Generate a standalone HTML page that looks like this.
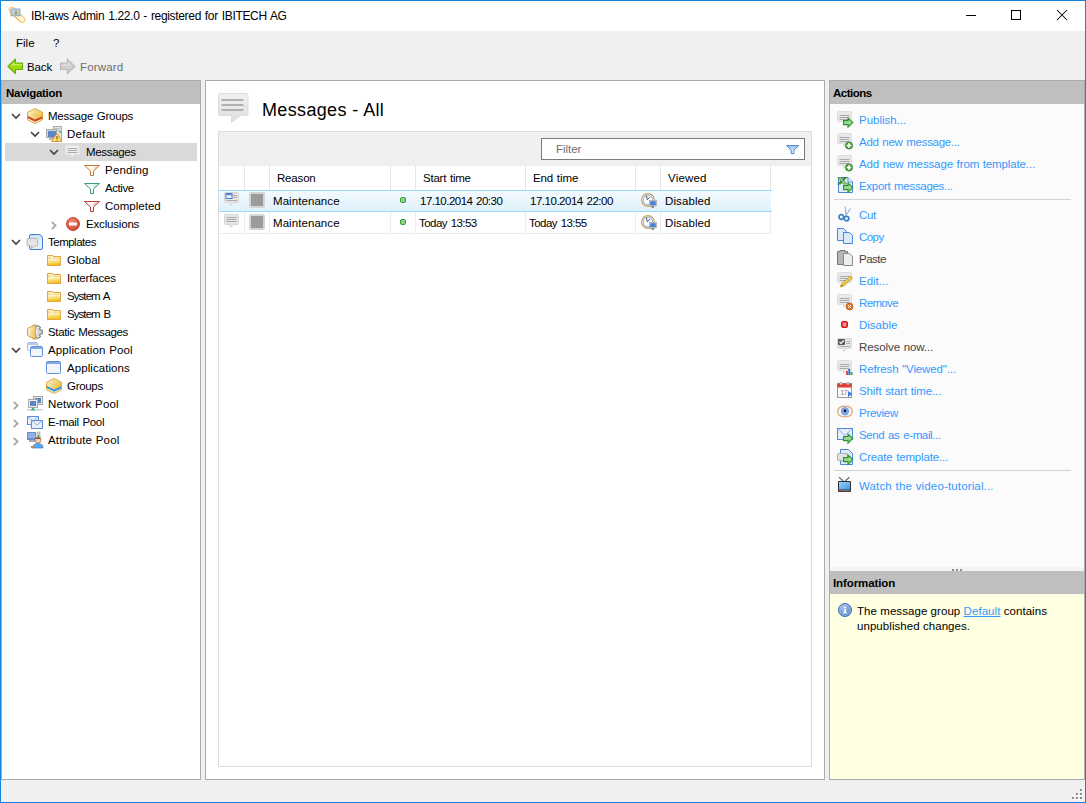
<!DOCTYPE html>
<html><head><meta charset="utf-8">
<style>
*{box-sizing:border-box;margin:0;padding:0}
html,body{width:1086px;height:803px;overflow:hidden;background:#f0f0f0}
body{position:relative;font-family:"Liberation Sans",sans-serif;font-size:12px;color:#000}
.a{position:absolute}
.t{position:absolute;font-size:11.5px;line-height:14px;white-space:nowrap}
.b{font-weight:bold}
svg{position:absolute;overflow:visible}
</style></head><body>
<div class="a" style="left:0;top:0;width:1086px;height:803px;border:1px solid #1883d7"></div>
<div class="a" style="left:1px;top:1px;width:1084px;height:30px;background:#fff"></div>
<div class="t" style="left:31px;top:9px;font-size:12px;letter-spacing:-0.325px;word-spacing:0.825px;">IBI-aws Admin 1.22.0 - registered for IBITECH AG</div>
<div class="t" style="left:16px;top:36px;letter-spacing:0.000px;">File</div><div class="t" style="left:53px;top:36px;">?</div>
<div class="t" style="left:27px;top:60px;letter-spacing:-0.100px;">Back</div><div class="t" style="left:80px;top:60px;letter-spacing:0.167px;color:#6d6d6d">Forward</div>
<svg style="left:6px;top:4px" width="22" height="22" viewBox="0 0 22 22"><g transform="translate(11.1,10.75) rotate(44)"><rect x="-10" y="-2.75" width="20" height="5.5" rx="2.75" fill="#fff7e2" stroke="#f0b040" stroke-width="1.1" stroke-dasharray="1.2 0.5"/></g><rect x="5" y="5" width="9" height="6.8" fill="#b9d3ef" stroke="#7b9cc0" stroke-width="0.8"/><path d="M8.4 10.2 L10 5.8 L11.6 10.2 Z" fill="#b8962a"/><g transform="translate(11.1,10.75) rotate(44)"><path d="M-7.25 2.75 H7.25" fill="none" stroke="#f0b040" stroke-width="1.1" stroke-dasharray="1.2 0.5"/></g></svg><svg style="left:7px;top:58px" width="16" height="16" viewBox="0 0 16 16"><path d="M1 8.5 L8.5 1 V5 H15.5 V11.5 H8.5 V15.5 Z" fill="#9ed80e" stroke="#6aad12" stroke-width="1.1" stroke-linejoin="round"/><path d="M3.2 8.3 L7.6 3.8 V6 H14.6 V7.2 H7.5 Z" fill="#c4ee5a"/></svg><svg style="left:60px;top:58px" width="16" height="16" viewBox="0 0 16 16"><path d="M14.8 8.5 L7.3 1 V5 H0.5 V11.5 H7.3 V15.6 Z" fill="#cfcfcf" stroke="#b9b9b9" stroke-width="1.1" stroke-linejoin="miter"/><path d="M2 6.3 H8 V4 L12 8 H2 Z" fill="#dcdcdc"/></svg><svg style="left:966px;top:15px" width="10" height="1" viewBox="0 0 10 1"><rect width="10" height="1" fill="#000"/></svg><svg style="left:1011px;top:10px" width="10" height="10" viewBox="0 0 10 10"><rect x="0.5" y="0.5" width="9" height="9" fill="none" stroke="#000"/></svg><svg style="left:1057px;top:10px" width="10" height="10" viewBox="0 0 10 10"><path d="M0 0 L10 10 M10 0 L0 10" stroke="#000" stroke-width="1.05"/></svg>
<div class="a" style="left:1px;top:80px;width:200px;height:700px;border:1px solid #ababab;background:#fff"></div>
<div class="a" style="left:2px;top:81px;width:198px;height:23px;background:#bfbfbf"></div>
<div class="t" style="left:6px;top:86px;font-weight:bold;letter-spacing:-0.278px;">Navigation</div>
<div class="a" style="left:5px;top:143px;width:192px;height:18px;background:#d9d9d9"></div>
<svg style="left:11px;top:113px" width="10" height="7" viewBox="0 0 10 7"><path d="M1 1 L5 5 L9 1" fill="none" stroke="#404040" stroke-width="1.6"/></svg>
<svg style="left:27px;top:108px" width="16" height="16" viewBox="0 0 16 16"><defs><linearGradient id="hgd2402e" x1="0" y1="0" x2="1" y2="0.6"><stop offset="0" stop-color="#fff8e0"/><stop offset="0.55" stop-color="#f6d98a"/><stop offset="1" stop-color="#f0c030"/></linearGradient></defs><path d="M8 0.5 L15.5 4.3 L15.5 11.7 L8 15.5 L0.5 11.7 L0.5 4.3 Z" fill="#fdf6d2"/><path d="M1 4.5 L8 1 L15 4.5 V9 L8 12 L1 8.5 Z" fill="url(#hgd2402e)"/><path d="M8 1.5 L8 7 M3 5 L8 7 L13 5" fill="none" stroke="#e8c070" stroke-width="0.7" opacity="0.8"/><path d="M1 8 L8 11.5 L15 8.5 V10.7 L8 13.7 L1 10.2 Z" fill="#d2402e"/><path d="M8 0.5 L15.5 4.3 L15.5 11.7 L8 15.5 L0.5 11.7 L0.5 4.3 Z" fill="none" stroke="#d6a640" stroke-width="1"/></svg>
<div class="t" style="left:48px;top:109px;letter-spacing:-0.225px;word-spacing:0.725px;">Message Groups</div>
<svg style="left:30px;top:131px" width="10" height="7" viewBox="0 0 10 7"><path d="M1 1 L5 5 L9 1" fill="none" stroke="#404040" stroke-width="1.6"/></svg>
<svg style="left:46px;top:126px" width="16" height="16" viewBox="0 0 16 16"><rect x="7.5" y="0.5" width="8" height="14" fill="#e6e6e6" stroke="#a9a9a9"/><rect x="9" y="2" width="5" height="1" fill="#bbb"/><rect x="9" y="4" width="5" height="1" fill="#bbb"/><rect x="0.5" y="3.5" width="10" height="8" fill="#d9d9d9" stroke="#a9a9a9"/><rect x="2" y="5" width="8" height="6" fill="#5b86c8"/><rect x="3" y="12" width="5" height="2" fill="#b9b9b9"/><circle cx="14" cy="6" r="1" fill="#3cb34a"/><path d="M11 7.3 L16 15.5 H5.5 Z" fill="#fbe27a" stroke="#d99a3a" stroke-width="1" stroke-linejoin="round"/><rect x="10.4" y="10" width="1.2" height="3" fill="#8a5a10"/><rect x="10.4" y="13.6" width="1.2" height="1" fill="#8a5a10"/></svg>
<div class="t" style="left:67px;top:127px;letter-spacing:0.267px;">Default</div>
<svg style="left:49px;top:149px" width="10" height="7" viewBox="0 0 10 7"><path d="M1 1 L5 5 L9 1" fill="none" stroke="#404040" stroke-width="1.6"/></svg>
<svg style="left:65px;top:145px" width="16" height="14" viewBox="0 0 16 14"><path d="M1.5 0.5 H13.5 Q14.5 0.5 14.5 1.5 V8.5 Q14.5 9.5 13.5 9.5 H9.5 L6.5 12.5 L6.5 9.5 H1.5 Q0.5 9.5 0.5 8.5 V1.5 Q0.5 0.5 1.5 0.5 Z" fill="#eeeeee" stroke="#e2e2e2" stroke-width="1"/><rect x="2.5" y="3" width="10" height="1" fill="#acacac"/><rect x="2.5" y="5" width="10" height="1" fill="#acacac"/><rect x="2.5" y="7" width="10" height="1" fill="#acacac"/></svg>
<div class="t" style="left:86px;top:145px;letter-spacing:-0.329px;">Messages</div>
<svg style="left:84px;top:165px" width="16" height="12" viewBox="0 0 16 12"><path d="M0.5 0.5 H15.5 L9.5 6 V10.5 H6.5 V6 Z" fill="#fffaf3" stroke="#c77b35" stroke-width="1"/><path d="M9 5.5 L14 1.5 L10 1.5 Z" fill="#c77b35" opacity="0.25"/></svg>
<div class="t" style="left:105px;top:163px;letter-spacing:0.217px;">Pending</div>
<svg style="left:84px;top:183px" width="16" height="12" viewBox="0 0 16 12"><path d="M0.5 0.5 H15.5 L9.5 6 V10.5 H6.5 V6 Z" fill="#f4fbf7" stroke="#3f9a6e" stroke-width="1"/><path d="M9 5.5 L14 1.5 L10 1.5 Z" fill="#3f9a6e" opacity="0.25"/></svg>
<div class="t" style="left:105px;top:181px;letter-spacing:-0.420px;">Active</div>
<svg style="left:84px;top:201px" width="16" height="12" viewBox="0 0 16 12"><path d="M0.5 0.5 H15.5 L9.5 6 V10.5 H6.5 V6 Z" fill="#fff6f6" stroke="#b43b3b" stroke-width="1"/><path d="M9 5.5 L14 1.5 L10 1.5 Z" fill="#b43b3b" opacity="0.25"/></svg>
<div class="t" style="left:105px;top:199px;letter-spacing:0.013px;">Completed</div>
<svg style="left:51px;top:221px" width="7" height="10" viewBox="0 0 7 10"><path d="M0.8 0.8 L4.6 4.5 L0.8 8.2" fill="none" stroke="#a6a6a6" stroke-width="1.8"/></svg>
<svg style="left:66px;top:217px" width="14" height="14" viewBox="0 0 14 14"><defs><radialGradient id="ne" cx="0.4" cy="0.35" r="0.7"><stop offset="0" stop-color="#f3907f"/><stop offset="1" stop-color="#d23b2b"/></radialGradient></defs><circle cx="7" cy="7" r="6.5" fill="url(#ne)" stroke="#c8473a" stroke-width="1"/><rect x="3" y="5.5" width="8" height="3" fill="#fff"/></svg>
<div class="t" style="left:86px;top:217px;letter-spacing:-0.178px;">Exclusions</div>
<svg style="left:11px;top:239px" width="10" height="7" viewBox="0 0 10 7"><path d="M1 1 L5 5 L9 1" fill="none" stroke="#404040" stroke-width="1.6"/></svg>
<svg style="left:27px;top:234px" width="16" height="16" viewBox="0 0 16 16"><defs><linearGradient id="tg" x1="0" y1="0" x2="1" y2="1"><stop offset="0" stop-color="#c7dcf8"/><stop offset="1" stop-color="#eef5fe"/></linearGradient></defs><path d="M4 0.5 H11 Q15.5 0.5 15.5 5 V14 Q15.5 15.5 14 15.5 H4 Q2.5 15.5 2.5 14 V2 Q2.5 0.5 4 0.5 Z" fill="url(#tg)" stroke="#3f7fd6" stroke-width="1"/><path d="M1 4.5 H9.5 Q10.5 4.5 10.5 5.5 V11 Q10.5 12 9.5 12 H7 L4.5 14.5 V12 H1 Q0 12 0 11 V5.5 Q0 4.5 1 4.5 Z" fill="#e4e4e4" stroke="#b8b8b8" stroke-width="1"/></svg>
<div class="t" style="left:48px;top:235px;letter-spacing:-0.500px;">Templates</div>
<svg style="left:47px;top:255px" width="14" height="11" viewBox="0 0 14 11"><defs><linearGradient id="fg" x1="0" y1="0" x2="0.3" y2="1"><stop offset="0" stop-color="#fff6c8"/><stop offset="1" stop-color="#f1c21a"/></linearGradient></defs><path d="M0.5 1 Q0.5 0.5 1 0.5 H5.5 L6.5 1.5 H13 Q13.5 1.5 13.5 2 V10.5 H0.5 Z" fill="#fdf0c6" stroke="#e6a448" stroke-width="1"/><path d="M1 3.2 H4.5 M6.5 3.2 H13" stroke="#f3c868" stroke-width="0.9"/><path d="M1 5 H13 V10 H1 Z" fill="url(#fg)"/><path d="M0.5 1 Q0.5 0.5 1 0.5 H5.5 L6.5 1.5 H13 Q13.5 1.5 13.5 2 V10.5 H0.5 Z" fill="none" stroke="#e6a448" stroke-width="1"/></svg>
<div class="t" style="left:67px;top:253px;letter-spacing:-0.040px;">Global</div>
<svg style="left:47px;top:273px" width="14" height="11" viewBox="0 0 14 11"><defs><linearGradient id="fg" x1="0" y1="0" x2="0.3" y2="1"><stop offset="0" stop-color="#fff6c8"/><stop offset="1" stop-color="#f1c21a"/></linearGradient></defs><path d="M0.5 1 Q0.5 0.5 1 0.5 H5.5 L6.5 1.5 H13 Q13.5 1.5 13.5 2 V10.5 H0.5 Z" fill="#fdf0c6" stroke="#e6a448" stroke-width="1"/><path d="M1 3.2 H4.5 M6.5 3.2 H13" stroke="#f3c868" stroke-width="0.9"/><path d="M1 5 H13 V10 H1 Z" fill="url(#fg)"/><path d="M0.5 1 Q0.5 0.5 1 0.5 H5.5 L6.5 1.5 H13 Q13.5 1.5 13.5 2 V10.5 H0.5 Z" fill="none" stroke="#e6a448" stroke-width="1"/></svg>
<div class="t" style="left:67px;top:271px;letter-spacing:-0.156px;">Interfaces</div>
<svg style="left:47px;top:291px" width="14" height="11" viewBox="0 0 14 11"><defs><linearGradient id="fg" x1="0" y1="0" x2="0.3" y2="1"><stop offset="0" stop-color="#fff6c8"/><stop offset="1" stop-color="#f1c21a"/></linearGradient></defs><path d="M0.5 1 Q0.5 0.5 1 0.5 H5.5 L6.5 1.5 H13 Q13.5 1.5 13.5 2 V10.5 H0.5 Z" fill="#fdf0c6" stroke="#e6a448" stroke-width="1"/><path d="M1 3.2 H4.5 M6.5 3.2 H13" stroke="#f3c868" stroke-width="0.9"/><path d="M1 5 H13 V10 H1 Z" fill="url(#fg)"/><path d="M0.5 1 Q0.5 0.5 1 0.5 H5.5 L6.5 1.5 H13 Q13.5 1.5 13.5 2 V10.5 H0.5 Z" fill="none" stroke="#e6a448" stroke-width="1"/></svg>
<div class="t" style="left:67px;top:289px;letter-spacing:-0.933px;word-spacing:1.433px;">System A</div>
<svg style="left:47px;top:309px" width="14" height="11" viewBox="0 0 14 11"><defs><linearGradient id="fg" x1="0" y1="0" x2="0.3" y2="1"><stop offset="0" stop-color="#fff6c8"/><stop offset="1" stop-color="#f1c21a"/></linearGradient></defs><path d="M0.5 1 Q0.5 0.5 1 0.5 H5.5 L6.5 1.5 H13 Q13.5 1.5 13.5 2 V10.5 H0.5 Z" fill="#fdf0c6" stroke="#e6a448" stroke-width="1"/><path d="M1 3.2 H4.5 M6.5 3.2 H13" stroke="#f3c868" stroke-width="0.9"/><path d="M1 5 H13 V10 H1 Z" fill="url(#fg)"/><path d="M0.5 1 Q0.5 0.5 1 0.5 H5.5 L6.5 1.5 H13 Q13.5 1.5 13.5 2 V10.5 H0.5 Z" fill="none" stroke="#e6a448" stroke-width="1"/></svg>
<div class="t" style="left:67px;top:307px;letter-spacing:-0.933px;word-spacing:1.433px;">System B</div>
<svg style="left:27px;top:324px" width="16" height="16" viewBox="0 0 16 16"><defs><linearGradient id="sg" x1="0" y1="0" x2="1" y2="0.3"><stop offset="0" stop-color="#fffaf0"/><stop offset="1" stop-color="#f1c35a"/></linearGradient></defs><path d="M12.78 5.83 L15.25 6.15 L15.25 9.85 L12.78 10.17 L12.52 10.62 L13.48 12.92 L10.27 14.77 L8.76 12.79 L8.24 12.79 L6.73 14.77 L3.52 12.92 L4.48 10.62 L4.22 10.17 L1.75 9.85 L1.75 6.15 L4.22 5.83 L4.48 5.38 L3.52 3.08 L6.73 1.23 L8.24 3.21 L8.76 3.21 L10.27 1.23 L13.48 3.08 L12.52 5.38 Z" fill="#d6d6d6" stroke="#6f6f6f" stroke-width="1" stroke-linejoin="round"/><circle cx="8.5" cy="8" r="2" fill="#f6f6f6"/><path d="M8.5 0.5 L0.5 4.5 L0.5 11.5 L8.5 15.5 Z" fill="url(#sg)" stroke="#dca640" stroke-width="1"/></svg>
<div class="t" style="left:48px;top:325px;letter-spacing:-0.354px;word-spacing:0.854px;">Static Messages</div>
<svg style="left:11px;top:347px" width="10" height="7" viewBox="0 0 10 7"><path d="M1 1 L5 5 L9 1" fill="none" stroke="#404040" stroke-width="1.6"/></svg>
<svg style="left:27px;top:342px" width="16" height="16" viewBox="0 0 16 16"><g opacity="0.6"><rect x="0.5" y="0.5" width="10" height="8" rx="1" fill="#f2f5fb" stroke="#5e8fd6" stroke-width="1"/><rect x="1" y="1" width="9" height="2" fill="#82a9e3"/></g><g opacity="1"><rect x="3.5" y="4.5" width="12" height="10" rx="1" fill="#f2f5fb" stroke="#5e8fd6" stroke-width="1"/><rect x="4" y="5" width="11" height="2" fill="#82a9e3"/></g></svg>
<div class="t" style="left:48px;top:343px;letter-spacing:0.107px;word-spacing:0.393px;">Application Pool</div>
<svg style="left:46px;top:361px" width="16" height="14" viewBox="0 0 16 14"><g opacity="1"><rect x="0.5" y="0.5" width="14" height="12" rx="1" fill="#f2f5fb" stroke="#5e8fd6" stroke-width="1"/><rect x="1" y="1" width="13" height="2" fill="#82a9e3"/></g></svg>
<div class="t" style="left:67px;top:361px;letter-spacing:0.064px;">Applications</div>
<svg style="left:46px;top:378px" width="16" height="16" viewBox="0 0 16 16"><defs><linearGradient id="hg3a96d8" x1="0" y1="0" x2="1" y2="0.6"><stop offset="0" stop-color="#fff8e0"/><stop offset="0.55" stop-color="#f6d98a"/><stop offset="1" stop-color="#f0c030"/></linearGradient></defs><path d="M8 0.5 L15.5 4.3 L15.5 11.7 L8 15.5 L0.5 11.7 L0.5 4.3 Z" fill="#fdf6d2"/><path d="M1 4.5 L8 1 L15 4.5 V9 L8 12 L1 8.5 Z" fill="url(#hg3a96d8)"/><path d="M8 1.5 L8 7 M3 5 L8 7 L13 5" fill="none" stroke="#e8c070" stroke-width="0.7" opacity="0.8"/><path d="M1 8 L8 11.5 L15 8.5 V10.7 L8 13.7 L1 10.2 Z" fill="#3a96d8"/><path d="M8 0.5 L15.5 4.3 L15.5 11.7 L8 15.5 L0.5 11.7 L0.5 4.3 Z" fill="none" stroke="#d6a640" stroke-width="1"/></svg>
<div class="t" style="left:67px;top:379px;letter-spacing:-0.300px;">Groups</div>
<svg style="left:13px;top:401px" width="7" height="10" viewBox="0 0 7 10"><path d="M0.8 0.8 L4.6 4.5 L0.8 8.2" fill="none" stroke="#a6a6a6" stroke-width="1.8"/></svg>
<svg style="left:27px;top:396px" width="16" height="15" viewBox="0 0 16 15"><rect x="6.5" y="0.5" width="9" height="8" fill="#e8e8e8" stroke="#a9a9a9"/><rect x="8" y="2" width="6" height="5" fill="#5c86c6"/><rect x="1.5" y="3.5" width="9" height="8" fill="#ececec" stroke="#a9a9a9"/><rect x="3" y="5" width="6" height="5" fill="#5c86c6"/><rect x="5" y="11.5" width="2" height="1.5" fill="#9a9a9a"/><rect x="0" y="13" width="16" height="1.5" fill="#c9d3d3"/><rect x="5" y="12" width="2" height="1" fill="#3aa66a"/><rect x="4" y="13" width="4" height="1.5" fill="#4cbd7c"/></svg>
<div class="t" style="left:48px;top:397px;letter-spacing:0.170px;word-spacing:0.330px;">Network Pool</div>
<svg style="left:13px;top:419px" width="7" height="10" viewBox="0 0 7 10"><path d="M0.8 0.8 L4.6 4.5 L0.8 8.2" fill="none" stroke="#a6a6a6" stroke-width="1.8"/></svg>
<svg style="left:27px;top:416px" width="16" height="13" viewBox="0 0 16 13"><rect x="0.5" y="0.5" width="11" height="8" fill="#e9f1fc" stroke="#5e8fd6"/><path d="M0.5 0.5 L6 5 L11.5 0.5" fill="none" stroke="#8fb2e6"/><rect x="4.5" y="4.5" width="11" height="8" fill="#e9f1fc" stroke="#5e8fd6"/><path d="M4.5 4.5 L10 9 L15.5 4.5" fill="none" stroke="#8fb2e6"/></svg>
<div class="t" style="left:48px;top:415px;letter-spacing:-0.311px;word-spacing:0.811px;">E-mail Pool</div>
<svg style="left:13px;top:437px" width="7" height="10" viewBox="0 0 7 10"><path d="M0.8 0.8 L4.6 4.5 L0.8 8.2" fill="none" stroke="#a6a6a6" stroke-width="1.8"/></svg>
<svg style="left:27px;top:432px" width="16" height="16" viewBox="0 0 16 16"><rect x="0" y="0" width="9" height="8" fill="#6b8fcb"/><rect x="1" y="1" width="7" height="5" fill="#8fb0e0"/><rect x="2" y="8" width="6" height="2" fill="#a9a9a9"/><rect x="10" y="0" width="3" height="6" fill="#d0d0d0" stroke="#999" stroke-width="0.5"/><rect x="11" y="3" width="1" height="2" fill="#3aa66a"/><circle cx="11" cy="8" r="3" fill="#f4d2b0" stroke="#9a5a2a" stroke-width="0.6"/><path d="M8 7 Q11 3.5 14 7 Z" fill="#8a4f22"/><path d="M5 16 Q6 11.5 11 11.5 Q16 11.5 16 16 Z" fill="#59a9ef" stroke="#2a6fc0" stroke-width="0.6"/><rect x="4" y="14" width="2" height="2" fill="#e67e22"/></svg>
<div class="t" style="left:48px;top:433px;letter-spacing:0.142px;word-spacing:0.358px;">Attribute Pool</div>
<div class="a" style="left:205px;top:80px;width:620px;height:700px;border:1px solid #ababab;background:#fff"></div>
<svg style="left:218px;top:93px" width="31" height="31" viewBox="0 0 31 31"><defs><linearGradient id="cg" x1="0" y1="0" x2="0" y2="1"><stop offset="0" stop-color="#f1f1f1"/><stop offset="1" stop-color="#dedede"/></linearGradient></defs><path d="M2 0.5 H28 Q30 0.5 30 2.5 V20.5 Q30 22.5 28 22.5 H22.5 L13.5 29.5 V22.5 H2 Q0.5 22.5 0.5 20.5 V2.5 Q0.5 0.5 2 0.5 Z" fill="url(#cg)" stroke="#dcdcdc" stroke-width="1"/><rect x="3.5" y="6" width="22" height="2" fill="#b0b0b0"/><rect x="3.5" y="11" width="22" height="2" fill="#b0b0b0"/><rect x="3.5" y="16" width="22" height="2" fill="#b0b0b0"/></svg>
<div class="t" style="left:262px;top:100px;font-size:18px;letter-spacing:0.345px;word-spacing:0.155px;line-height:21px">Messages - All</div>
<div class="a" style="left:218px;top:131px;width:594px;height:636px;border:1px solid #dcdcdc"></div>
<div class="a" style="left:219px;top:132px;width:592px;height:34px;background:#f0f0f0"></div>
<div class="a" style="left:541px;top:138px;width:264px;height:22px;border:1px solid #7a7a7a;background:#fff"></div>
<div class="t" style="left:556px;top:142px;letter-spacing:-0.040px;color:#6d6d6d">Filter</div>
<svg style="left:786px;top:145px" width="14" height="10" viewBox="0 0 14 10"><defs><linearGradient id="flt" x1="0" y1="0" x2="0" y2="1"><stop offset="0" stop-color="#9cc4f0"/><stop offset="1" stop-color="#f0f7ff"/></linearGradient></defs><path d="M0.5 0.6 H12.6 L7.9 5.2 V8.6 H5.2 V5.2 Z" fill="url(#flt)" stroke="#4a7fcf" stroke-width="0.95" stroke-linejoin="round"/></svg>
<div class="a" style="left:244px;top:166px;width:1px;height:24px;background:#e5e5e5"></div>
<div class="a" style="left:244px;top:212px;width:1px;height:22px;background:#ececec"></div>
<div class="a" style="left:269px;top:166px;width:1px;height:24px;background:#e5e5e5"></div>
<div class="a" style="left:269px;top:212px;width:1px;height:22px;background:#ececec"></div>
<div class="a" style="left:390px;top:166px;width:1px;height:24px;background:#e5e5e5"></div>
<div class="a" style="left:390px;top:212px;width:1px;height:22px;background:#ececec"></div>
<div class="a" style="left:415px;top:166px;width:1px;height:24px;background:#e5e5e5"></div>
<div class="a" style="left:415px;top:212px;width:1px;height:22px;background:#ececec"></div>
<div class="a" style="left:525px;top:166px;width:1px;height:24px;background:#e5e5e5"></div>
<div class="a" style="left:525px;top:212px;width:1px;height:22px;background:#ececec"></div>
<div class="a" style="left:635px;top:166px;width:1px;height:24px;background:#e5e5e5"></div>
<div class="a" style="left:635px;top:212px;width:1px;height:22px;background:#ececec"></div>
<div class="a" style="left:660px;top:166px;width:1px;height:24px;background:#e5e5e5"></div>
<div class="a" style="left:660px;top:212px;width:1px;height:22px;background:#ececec"></div>
<div class="a" style="left:770px;top:166px;width:1px;height:24px;background:#e5e5e5"></div>
<div class="a" style="left:770px;top:212px;width:1px;height:22px;background:#ececec"></div>
<div class="t" style="left:277px;top:171px;letter-spacing:-0.180px;">Reason</div>
<div class="t" style="left:423px;top:171px;letter-spacing:-0.213px;word-spacing:0.713px;">Start time</div>
<div class="t" style="left:533px;top:171px;letter-spacing:-0.100px;word-spacing:0.600px;">End time</div>
<div class="t" style="left:668px;top:171px;letter-spacing:0.180px;">Viewed</div>
<div class="a" style="left:219px;top:190px;width:552px;height:22px;border-top:1px solid #99d9fa;border-bottom:1px solid #99d9fa;background:linear-gradient(#f3faff,#dff1fc)"></div><div class="a" style="left:771px;top:190px;width:1px;height:1px;background:#99d9fa"></div><div class="a" style="left:771px;top:211px;width:1px;height:1px;background:#99d9fa"></div>
<div class="a" style="left:219px;top:233px;width:552px;height:1px;background:#ececec"></div>
<svg style="left:224px;top:192px" width="16" height="15" viewBox="0 0 16 15"><path d="M1.5 0.5 H13.5 Q14.5 0.5 14.5 1.5 V9.5 Q14.5 10.5 13.5 10.5 H9.5 L6.5 13.5 L6.5 10.5 H1.5 Q0.5 10.5 0.5 9.5 V1.5 Q0.5 0.5 1.5 0.5 Z" fill="#e6e6e6" stroke="#d6d6d6" stroke-width="1"/><rect x="2" y="1.5" width="6" height="5" fill="#eef4fd" stroke="#4f7fcf" stroke-width="1"/><rect x="2.5" y="2" width="5" height="1.2" fill="#4f7fcf"/><rect x="9" y="3" width="4" height="1" fill="#a9a9a9"/><rect x="9" y="5" width="4" height="1" fill="#a9a9a9"/><rect x="2.5" y="8" width="10.5" height="1" fill="#a9a9a9"/></svg>
<div class="a" style="left:249px;top:192px;width:16px;height:16px;border:2px solid #d4d4d4;border-radius:2px;background:#9b9b9b"></div>
<div class="t" style="left:273px;top:194px;letter-spacing:0.070px;">Maintenance</div>
<svg style="left:400px;top:197px" width="6" height="6" viewBox="0 0 6 6"><rect x="0.5" y="0.5" width="5" height="5" rx="1.5" fill="#8fd48a" stroke="#3a9a3a" stroke-width="1"/></svg>
<div class="t" style="left:420px;top:194px;letter-spacing:-0.514px;word-spacing:1.014px;">17.10.2014 20:30</div>
<div class="t" style="left:530px;top:194px;letter-spacing:-0.479px;word-spacing:0.979px;">17.10.2014 22:00</div>
<svg style="left:641px;top:193px" width="16" height="16" viewBox="0 0 16 16"><circle cx="7" cy="7" r="6.4" fill="#fafcff" stroke="#c9a25a" stroke-width="1.2"/><circle cx="7" cy="7" r="4.8" fill="none" stroke="#7aa3e4" stroke-width="0.9"/><path d="M5.5 2.8 L6.2 6.8 L9.2 4" fill="none" stroke="#555" stroke-width="1"/><rect x="8.5" y="7.5" width="7" height="5.5" fill="#e8e8e8" stroke="#a0a0a0" stroke-width="0.7"/><rect x="9.2" y="8.2" width="5.6" height="4.1" fill="#4a7fcf"/><rect x="10.5" y="13" width="2.5" height="2" fill="#8a8a8a"/></svg>
<div class="t" style="left:665px;top:194px;letter-spacing:0.100px;">Disabled</div>
<svg style="left:224px;top:214px" width="16" height="15" viewBox="0 0 16 15"><path d="M1.5 0.5 H13.5 Q14.5 0.5 14.5 1.5 V9.5 Q14.5 10.5 13.5 10.5 H9.5 L6.5 13.5 L6.5 10.5 H1.5 Q0.5 10.5 0.5 9.5 V1.5 Q0.5 0.5 1.5 0.5 Z" fill="#e6e6e6" stroke="#d6d6d6" stroke-width="1"/><rect x="2.5" y="3" width="10" height="1" fill="#a9a9a9"/><rect x="2.5" y="5" width="10" height="1" fill="#a9a9a9"/><rect x="2.5" y="7" width="10" height="1" fill="#a9a9a9"/></svg>
<div class="a" style="left:249px;top:214px;width:16px;height:16px;border:2px solid #d4d4d4;border-radius:2px;background:#9b9b9b"></div>
<div class="t" style="left:273px;top:216px;letter-spacing:0.070px;">Maintenance</div>
<svg style="left:400px;top:219px" width="6" height="6" viewBox="0 0 6 6"><rect x="0.5" y="0.5" width="5" height="5" rx="1.5" fill="#8fd48a" stroke="#3a9a3a" stroke-width="1"/></svg>
<div class="t" style="left:419px;top:216px;letter-spacing:-0.544px;word-spacing:1.044px;">Today 13:53</div>
<div class="t" style="left:529px;top:216px;letter-spacing:-0.544px;word-spacing:1.044px;">Today 13:55</div>
<svg style="left:641px;top:215px" width="16" height="16" viewBox="0 0 16 16"><circle cx="7" cy="7" r="6.4" fill="#fafcff" stroke="#c9a25a" stroke-width="1.2"/><circle cx="7" cy="7" r="4.8" fill="none" stroke="#7aa3e4" stroke-width="0.9"/><path d="M5.5 2.8 L6.2 6.8 L9.2 4" fill="none" stroke="#555" stroke-width="1"/><rect x="8.5" y="7.5" width="7" height="5.5" fill="#e8e8e8" stroke="#a0a0a0" stroke-width="0.7"/><rect x="9.2" y="8.2" width="5.6" height="4.1" fill="#4a7fcf"/><rect x="10.5" y="13" width="2.5" height="2" fill="#8a8a8a"/></svg>
<div class="t" style="left:665px;top:216px;letter-spacing:0.100px;">Disabled</div>
<div class="a" style="left:829px;top:80px;width:256px;height:700px;border:1px solid #ababab;background:#fbfbfb"></div>
<div class="a" style="left:830px;top:81px;width:254px;height:23px;background:#bfbfbf"></div>
<div class="t" style="left:833px;top:86px;font-weight:bold;letter-spacing:-0.500px;">Actions</div>
<div class="t" style="left:859px;top:113px;letter-spacing:0.000px;color:#3399ff">Publish...</div>
<div class="t" style="left:859px;top:135px;letter-spacing:-0.280px;word-spacing:0.780px;color:#3399ff">Add new message...</div>
<div class="t" style="left:859px;top:157px;letter-spacing:-0.130px;word-spacing:0.630px;color:#3399ff">Add new message from template...</div>
<div class="t" style="left:859px;top:179px;letter-spacing:-0.306px;word-spacing:0.806px;color:#3399ff">Export messages...</div>
<div class="a" style="left:834px;top:199px;width:237px;height:1px;background:#d2d2d2"></div>
<div class="t" style="left:859px;top:208px;letter-spacing:-0.350px;color:#3399ff">Cut</div>
<div class="t" style="left:859px;top:230px;letter-spacing:-0.567px;color:#3399ff">Copy</div>
<div class="t" style="left:859px;top:252px;letter-spacing:-0.500px;color:#444">Paste</div>
<div class="t" style="left:859px;top:274px;letter-spacing:0.000px;color:#3399ff">Edit...</div>
<div class="t" style="left:859px;top:296px;letter-spacing:-0.660px;color:#3399ff">Remove</div>
<div class="t" style="left:859px;top:318px;letter-spacing:0.000px;color:#3399ff">Disable</div>
<div class="t" style="left:859px;top:340px;letter-spacing:-0.083px;word-spacing:0.583px;color:#444">Resolve now...</div>
<div class="t" style="left:859px;top:362px;letter-spacing:-0.124px;word-spacing:0.624px;color:#3399ff">Refresh "Viewed"...</div>
<div class="t" style="left:859px;top:384px;letter-spacing:-0.106px;word-spacing:0.606px;color:#3399ff">Shift start time...</div>
<div class="t" style="left:859px;top:406px;letter-spacing:-0.283px;color:#3399ff">Preview</div>
<div class="t" style="left:859px;top:428px;letter-spacing:-0.371px;word-spacing:0.871px;color:#3399ff">Send as e-mail...</div>
<div class="t" style="left:859px;top:450px;letter-spacing:-0.169px;word-spacing:0.669px;color:#3399ff">Create template...</div>
<div class="a" style="left:834px;top:470px;width:237px;height:1px;background:#d2d2d2"></div>
<div class="t" style="left:859px;top:479px;letter-spacing:0.146px;word-spacing:0.354px;color:#3399ff">Watch the video-tutorial...</div>
<svg style="left:837px;top:111px" width="16" height="16" viewBox="0 0 16 16"><path d="M1.5 0.5 H13.5 Q14.5 0.5 14.5 1.5 V9.5 Q14.5 10.5 13.5 10.5 H9.5 L6.5 13.5 L6.5 10.5 H1.5 Q0.5 10.5 0.5 9.5 V1.5 Q0.5 0.5 1.5 0.5 Z" fill="#e9e9e9" stroke="#dedede" stroke-width="1"/><rect x="2.5" y="4" width="10" height="1" fill="#a9a9a9"/><rect x="2.5" y="6" width="10" height="1" fill="#a9a9a9"/><rect x="2.5" y="8" width="10" height="1" fill="#a9a9a9"/><path transform="translate(6.5,7) scale(1)" d="M0 2.6 H4.5 V0 L9.3 4.6 L4.5 9.2 V6.6 H0 Z" fill="#8fd08a" stroke="#2f962f" stroke-width="1.1" stroke-linejoin="miter"/><path transform="translate(6.5,7) scale(1)" d="M1 3.8 H5.5 V2.4 L7.5 4.6 H1 Z" fill="#b9e6b4"/></svg>
<svg style="left:837px;top:133px" width="16" height="16" viewBox="0 0 16 16"><path d="M1.5 0.5 H13.5 Q14.5 0.5 14.5 1.5 V9.5 Q14.5 10.5 13.5 10.5 H9.5 L6.5 13.5 L6.5 10.5 H1.5 Q0.5 10.5 0.5 9.5 V1.5 Q0.5 0.5 1.5 0.5 Z" fill="#e9e9e9" stroke="#dedede" stroke-width="1"/><rect x="2.5" y="4" width="10" height="1" fill="#a9a9a9"/><rect x="2.5" y="6" width="10" height="1" fill="#a9a9a9"/><rect x="2.5" y="8" width="10" height="1" fill="#a9a9a9"/><circle cx="12" cy="12.5" r="3.6" fill="#4aa53f" stroke="#2f7f26" stroke-width="0.8"/><rect x="9.7" y="11.7" width="4.6" height="1.6" fill="#fff"/><rect x="11.2" y="10.2" width="1.6" height="4.6" fill="#fff"/></svg>
<svg style="left:837px;top:155px" width="16" height="16" viewBox="0 0 16 16"><path d="M1.5 0.5 H13.5 Q14.5 0.5 14.5 1.5 V9.5 Q14.5 10.5 13.5 10.5 H9.5 L6.5 13.5 L6.5 10.5 H1.5 Q0.5 10.5 0.5 9.5 V1.5 Q0.5 0.5 1.5 0.5 Z" fill="#e9e9e9" stroke="#dedede" stroke-width="1"/><rect x="2.5" y="4" width="10" height="1" fill="#a9a9a9"/><rect x="2.5" y="6" width="10" height="1" fill="#a9a9a9"/><rect x="2.5" y="8" width="10" height="1" fill="#a9a9a9"/><circle cx="12" cy="12.5" r="3.6" fill="#4aa53f" stroke="#2f7f26" stroke-width="0.8"/><rect x="9.7" y="11.7" width="4.6" height="1.6" fill="#fff"/><rect x="11.2" y="10.2" width="1.6" height="4.6" fill="#fff"/></svg>
<svg style="left:837px;top:177px" width="16" height="16" viewBox="0 0 16 16"><path d="M1.5 0.5 H11 L15.5 5 V15.5 H1.5 Z" fill="#e3eefc" stroke="#4a86d6"/><path d="M11 0.5 V5 H15.5" fill="#f4f8fe" stroke="#4a86d6"/><path d="M0 0 H4 L10.5 7.5 H6.5 Z" fill="#4c9a3a"/><path d="M10.5 0 H7 L0 7.5 H3.5 Z" fill="#2f7f2a" opacity="0.9"/><path d="M1.5 0.8 H3.6 L9 6.8 H7 Z" fill="#9ed28a"/><path transform="translate(6.5,6) scale(1)" d="M0 2.6 H4.5 V0 L9.3 4.6 L4.5 9.2 V6.6 H0 Z" fill="#8fd08a" stroke="#2f962f" stroke-width="1.1" stroke-linejoin="miter"/><path transform="translate(6.5,6) scale(1)" d="M1 3.8 H5.5 V2.4 L7.5 4.6 H1 Z" fill="#b9e6b4"/></svg>
<svg style="left:837px;top:206px" width="16" height="16" viewBox="0 0 16 16"><path d="M8.3 0.5 L9 10 M13.5 2.5 L9.5 8.5" stroke="#9ab8d8" stroke-width="1.3"/><circle cx="4.3" cy="11" r="2.3" fill="none" stroke="#3a80cc" stroke-width="1.7"/><circle cx="9.5" cy="12.6" r="2.3" fill="none" stroke="#3a80cc" stroke-width="1.7"/></svg>
<svg style="left:837px;top:228px" width="16" height="16" viewBox="0 0 16 16"><path d="M0.5 0.5 H6.5 L9.5 3.5 V12.5 H0.5 Z" fill="#dbe9fb" stroke="#4a86d6"/><path d="M6.5 4.5 H12.5 L15.5 7.5 V15.5 H6.5 Z" fill="#dbe9fb" stroke="#4a86d6"/></svg>
<svg style="left:837px;top:250px" width="16" height="16" viewBox="0 0 16 16"><path d="M0.5 1.5 H3 V0.5 H8 V1.5 H10.5 V14.5 H0.5 Z" fill="#b5b5b5" stroke="#777"/><path d="M6.5 3.5 H12.5 L15.5 6.5 V15.5 H6.5 Z" fill="#eeeeee" stroke="#8a8a8a"/></svg>
<svg style="left:837px;top:272px" width="16" height="16" viewBox="0 0 16 16"><path d="M1.5 0.5 H13.5 Q14.5 0.5 14.5 1.5 V9.5 Q14.5 10.5 13.5 10.5 H9.5 L6.5 13.5 L6.5 10.5 H1.5 Q0.5 10.5 0.5 9.5 V1.5 Q0.5 0.5 1.5 0.5 Z" fill="#e9e9e9" stroke="#dedede" stroke-width="1"/><rect x="2.5" y="4" width="10" height="1" fill="#a9a9a9"/><rect x="2.5" y="6" width="10" height="1" fill="#a9a9a9"/><rect x="2.5" y="8" width="10" height="1" fill="#a9a9a9"/><path d="M3.5 15 L4.5 12 L13.5 4 L15.5 6 L6.5 14 Z" fill="#f4c942" stroke="#b98a2a" stroke-width="0.8"/><path d="M3.5 15 L4.5 12 L6.5 14 Z" fill="#c97a3a"/></svg>
<svg style="left:837px;top:294px" width="16" height="16" viewBox="0 0 16 16"><path d="M1.5 0.5 H13.5 Q14.5 0.5 14.5 1.5 V9.5 Q14.5 10.5 13.5 10.5 H9.5 L6.5 13.5 L6.5 10.5 H1.5 Q0.5 10.5 0.5 9.5 V1.5 Q0.5 0.5 1.5 0.5 Z" fill="#e9e9e9" stroke="#dedede" stroke-width="1"/><rect x="2.5" y="4" width="10" height="1" fill="#a9a9a9"/><rect x="2.5" y="6" width="10" height="1" fill="#a9a9a9"/><rect x="2.5" y="8" width="10" height="1" fill="#a9a9a9"/><circle cx="12.5" cy="12.5" r="3.4" fill="#e8741f" stroke="#b85510" stroke-width="0.8"/><path d="M11 11 L14 14 M14 11 L11 14" stroke="#fff" stroke-width="1"/></svg>
<svg style="left:841px;top:321px" width="7" height="7" viewBox="0 0 7 7"><rect x="0.8" y="0.8" width="5.4" height="5.4" rx="1.5" fill="#f19a9a" stroke="#e01010" stroke-width="1.6"/></svg>
<svg style="left:837px;top:338px" width="16" height="16" viewBox="0 0 16 16"><path d="M1.5 0.5 H13.5 Q14.5 0.5 14.5 1.5 V9.5 Q14.5 10.5 13.5 10.5 H9.5 L6.5 13.5 L6.5 10.5 H1.5 Q0.5 10.5 0.5 9.5 V1.5 Q0.5 0.5 1.5 0.5 Z" fill="#e6e6e6" stroke="#d6d6d6" stroke-width="1"/><rect x="1" y="1" width="7" height="6" rx="1" fill="#5a5a5a"/><path d="M2.5 4 L4 5.5 L6.8 2.5" fill="none" stroke="#fff" stroke-width="1.2"/><rect x="9.5" y="3" width="3.5" height="1" fill="#a9a9a9"/><rect x="9.5" y="5" width="3.5" height="1" fill="#a9a9a9"/><rect x="2.5" y="8" width="10.5" height="1" fill="#a9a9a9"/></svg>
<svg style="left:837px;top:360px" width="16" height="16" viewBox="0 0 16 16"><path d="M1.5 0.5 H13.5 Q14.5 0.5 14.5 1.5 V9.5 Q14.5 10.5 13.5 10.5 H9.5 L6.5 13.5 L6.5 10.5 H1.5 Q0.5 10.5 0.5 9.5 V1.5 Q0.5 0.5 1.5 0.5 Z" fill="#e9e9e9" stroke="#dedede" stroke-width="1"/><rect x="2.5" y="4" width="10" height="1" fill="#a9a9a9"/><rect x="2.5" y="6" width="10" height="1" fill="#a9a9a9"/><rect x="2.5" y="8" width="10" height="1" fill="#a9a9a9"/><rect x="9" y="11" width="2" height="4" fill="#e04a4a"/><rect x="11.3" y="9" width="2" height="6" fill="#3a6fd8"/><rect x="13.6" y="12" width="2" height="3" fill="#3aaa4a"/></svg>
<svg style="left:837px;top:382px" width="16" height="16" viewBox="0 0 16 16"><rect x="0.5" y="1.5" width="14" height="14" fill="#fafafa" stroke="#999"/><rect x="0.5" y="1.5" width="14" height="4" fill="#e53935"/><rect x="3" y="0" width="2" height="3" rx="1" fill="#ddd" stroke="#888" stroke-width="0.5"/><rect x="10" y="0" width="2" height="3" rx="1" fill="#ddd" stroke="#888" stroke-width="0.5"/><text x="3.5" y="13" font-size="6.5" font-family="Liberation Sans" fill="#777">17</text><path d="M11 9 L15.5 12 L11 15 Z" fill="#3a7fd8"/></svg>
<svg style="left:837px;top:405px" width="16" height="13" viewBox="0 0 16 13"><path d="M0.6 6.5 Q1 1.2 8 1.2 Q15 1.2 15.4 6.5 Q15 11.8 8 11.8 Q1 11.8 0.6 6.5 Z" fill="#fafafa" stroke="#dba882" stroke-width="1.3"/><circle cx="8" cy="6.3" r="4.2" fill="#7ca4e6"/><circle cx="8" cy="5.8" r="1.3" fill="#111"/></svg>
<svg style="left:837px;top:427px" width="16" height="16" viewBox="0 0 16 16"><rect x="0.5" y="1.5" width="15" height="11" fill="#e4eefc" stroke="#4f86d6"/><path d="M1.5 2.5 L8 8.5 L14.5 2.5" fill="none" stroke="#8fb3e8" stroke-width="1"/><path transform="translate(6.5,7) scale(1)" d="M0 2.6 H4.5 V0 L9.3 4.6 L4.5 9.2 V6.6 H0 Z" fill="#8fd08a" stroke="#2f962f" stroke-width="1.1" stroke-linejoin="miter"/><path transform="translate(6.5,7) scale(1)" d="M1 3.8 H5.5 V2.4 L7.5 4.6 H1 Z" fill="#b9e6b4"/></svg>
<svg style="left:837px;top:449px" width="16" height="16" viewBox="0 0 16 16"><path d="M3.5 0.5 H11.5 L15.5 4.5 V15.5 H3.5 Z" fill="#dfeafb" stroke="#4a86d6"/><rect x="0.5" y="4.5" width="10" height="7" rx="1.5" fill="#e4e4e4" stroke="#b0b0b0"/><path transform="translate(6.5,6) scale(1)" d="M0 2.6 H4.5 V0 L9.3 4.6 L4.5 9.2 V6.6 H0 Z" fill="#8fd08a" stroke="#2f962f" stroke-width="1.1" stroke-linejoin="miter"/><path transform="translate(6.5,6) scale(1)" d="M1 3.8 H5.5 V2.4 L7.5 4.6 H1 Z" fill="#b9e6b4"/></svg>
<svg style="left:837px;top:477px" width="16" height="16" viewBox="0 0 16 16"><defs><linearGradient id="tv" x1="0" y1="0" x2="1" y2="1"><stop offset="0" stop-color="#9fd0f8"/><stop offset="1" stop-color="#3f9ae8"/></linearGradient></defs><path d="M2 0.3 L6.3 4 M12.5 0.3 L8.3 4" fill="none" stroke="#5a6f8a" stroke-width="1.2"/><rect x="1" y="4" width="13" height="11" rx="0.8" fill="#333"/><rect x="2" y="5" width="11" height="7.5" fill="url(#tv)"/><rect x="2" y="13" width="11" height="1.2" fill="#777"/><rect x="2.5" y="13" width="1.6" height="1.2" fill="#e02020"/></svg>
<div class="a" style="left:830px;top:567px;width:254px;height:4px;background:#f3f3f3"></div>
<div class="a" style="left:952px;top:569px;width:2px;height:2px;background:#8c8c8c"></div><div class="a" style="left:956px;top:569px;width:2px;height:2px;background:#8c8c8c"></div><div class="a" style="left:960px;top:569px;width:2px;height:2px;background:#8c8c8c"></div>
<div class="a" style="left:830px;top:571px;width:254px;height:208px;background:#ffffe1"></div>
<div class="a" style="left:830px;top:571px;width:254px;height:23px;background:#bfbfbf"></div>
<div class="t" style="left:833px;top:576px;font-weight:bold;letter-spacing:-0.100px;">Information</div>
<svg style="left:838px;top:603px" width="14" height="14" viewBox="0 0 14 14"><defs><radialGradient id="ig" cx="0.4" cy="0.3" r="0.8"><stop offset="0" stop-color="#a9c4ea"/><stop offset="1" stop-color="#4d7cc4"/></radialGradient></defs><circle cx="7" cy="7" r="6.5" fill="url(#ig)" stroke="#3f6fc0" stroke-width="1"/><circle cx="7" cy="7" r="5.2" fill="none" stroke="#b5cdee" stroke-width="0.7" opacity="0.8"/><rect x="6.2" y="5.7" width="1.7" height="3.6" fill="#fff"/><rect x="6.2" y="3.6" width="1.7" height="1.4" fill="#fff"/><rect x="5.3" y="9" width="3.5" height="1.3" fill="#fff"/></svg>
<div class="t" style="left:857px;top:604px;line-height:15px;letter-spacing:0.06px">The message group <span style="color:#3399ff;text-decoration:underline">Default</span> contains<br>unpublished changes.</div>
<div class="a" style="left:1080px;top:789px;width:2px;height:2px;background:#8c8c8c;box-shadow:1px 1px 0 #fff"></div><div class="a" style="left:1076px;top:793px;width:2px;height:2px;background:#8c8c8c;box-shadow:1px 1px 0 #fff"></div><div class="a" style="left:1080px;top:793px;width:2px;height:2px;background:#8c8c8c;box-shadow:1px 1px 0 #fff"></div><div class="a" style="left:1072px;top:797px;width:2px;height:2px;background:#8c8c8c;box-shadow:1px 1px 0 #fff"></div><div class="a" style="left:1076px;top:797px;width:2px;height:2px;background:#8c8c8c;box-shadow:1px 1px 0 #fff"></div><div class="a" style="left:1080px;top:797px;width:2px;height:2px;background:#8c8c8c;box-shadow:1px 1px 0 #fff"></div>
</body></html>
